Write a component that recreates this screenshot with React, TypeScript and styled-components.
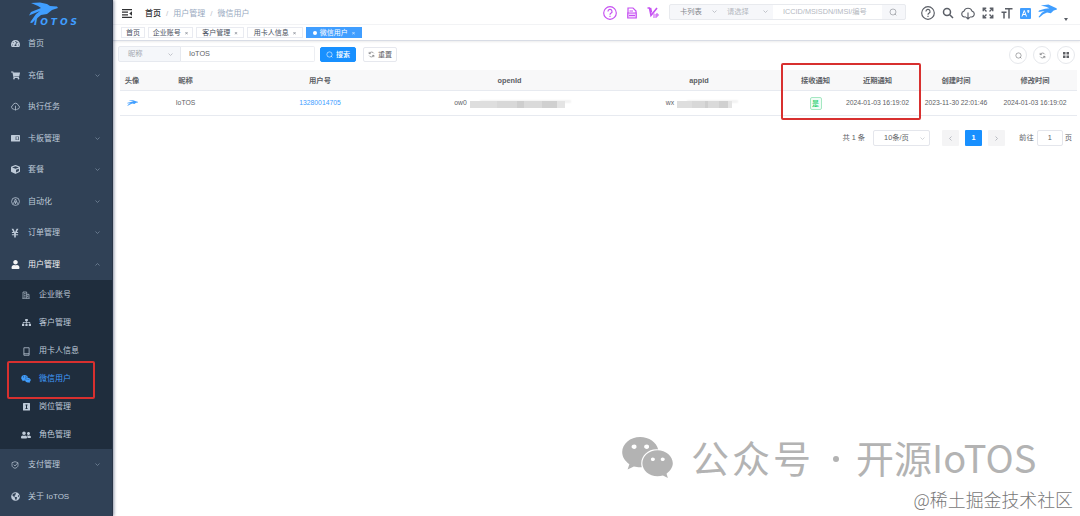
import React from 'react';
import styled, { createGlobalStyle } from 'styled-components';
import {
  FaTachometerAlt, FaShoppingCart, FaYenSign, FaUser, FaSitemap, FaWeixin,
  FaGlobeAmericas, FaUserFriends, FaCube,
} from 'react-icons/fa';

const Global = createGlobalStyle`
  * { box-sizing: border-box; }
  body {
    margin: 0; background: #fff; overflow: hidden; color: #606266;
    font-family: "Liberation Sans", "Noto Sans CJK SC", sans-serif;
    font-size: 7.3px; line-height: 1;
  }
  svg { display: block; flex: none; }
`;

const Page = styled.div`
  position: relative; display: flex; width: 1080px; height: 516px; background: #fff; overflow: hidden;
`;

/* Sidebar */
const Sidebar = styled.aside`
  width: 113px; flex: none; background: #304156; color: #bfcbd9;
  border-right: 1px solid #293547; box-shadow: 1px 0 3px rgba(0, 21, 60, 0.45);
  position: relative; z-index: 1;
`;
const LogoBox = styled.div`
  height: 28px; padding-left: 28px;
`;
const MenuRow = styled.div<{ $open?: boolean }>`
  display: flex; align-items: center; height: 31.5px; padding: 0 12px 0 10px;
  font-size: 8px; color: ${p => (p.$open ? '#f4f4f5' : '#bfcbd9')};
`;
const IconSlot = styled.span`
  display: flex; justify-content: center; width: 10px; margin-right: 8px; flex: none;
`;
const Grow = styled.span`flex: 1; white-space: nowrap; padding-top: 1px;`;
const SubMenu = styled.div`
  background: #1f2d3d; height: 169px; padding-top: 0.8px;
`;
const SubRow = styled.div<{ $active?: boolean }>`
  display: flex; align-items: center; height: 28.1px; padding-left: 21px; font-size: 8px;
  white-space: nowrap; color: ${p => (p.$active ? '#409eff' : '#bfcbd9')};
`;

/* Header */
const Main = styled.main`flex: 1; min-width: 0;`;
const Navbar = styled.header`
  display: flex; align-items: center; height: 25px; padding: 2px 7px 0 9px;
  border-bottom: 1px solid #f3f4f6;
`;
const Crumbs = styled.nav`
  display: flex; gap: 5px; margin: 2px 0 0 13px; font-size: 8px; color: #97a8be; flex: 1;
  b { font-weight: 500; color: #303133; }
  i { font-style: normal; color: #c0c4cc; }
`;
const PurpleIcons = styled.div`
  display: flex; align-items: center; gap: 10px; color: #c650f2; margin: -1px 5px 0 0;
`;
const SearchGroup = styled.div`
  display: flex; width: 237px; height: 16px; border: 1px solid #e8eaee; border-radius: 2px;
  background: #f6f7fa; margin: -3px 15px 0 5px;
`;
const GroupPart = styled.div<{ $w: number; $white?: boolean; $dark?: boolean; $pad?: number }>`
  display: flex; align-items: center; justify-content: space-between; width: ${p => p.$w}px;
  padding: 0 ${p => (p.$white ? 0 : 5)}px 0 ${p => p.$pad ?? 10}px; font-size: 7.3px; white-space: nowrap;
  background: ${p => (p.$white ? '#fff' : 'transparent')}; color: ${p => (p.$dark ? '#85888e' : '#b4b8bf')};
`;
const DarkIcons = styled.div`
  display: flex; align-items: center; color: #5a5e66; gap: 7px; width: 152px;
`;
const CaretDown = styled.span`
  border: 2px solid transparent; border-top: 3px solid #5a5e66; margin: 14px 0 0 0;
`;
const AvatarSlot = styled.span`margin-top: -5px;`;

const Tabs = styled.div`
  display: flex; height: 16px; padding: 2px 0 0 8px; gap: 3px; border-bottom: 1px solid #d8dce5;
  box-shadow: 0 1px 2px rgba(0, 0, 0, 0.08);
`;
const Tab = styled.div<{ $w: number; $active?: boolean }>`
  display: flex; align-items: center; justify-content: center; width: ${p => p.$w}px; height: 11px;
  font-size: 7px; white-space: nowrap; gap: 4px;
  border: 1px solid ${p => (p.$active ? '#409eff' : '#e9ebf1')};
  background: ${p => (p.$active ? '#409eff' : '#fff')};
  color: ${p => (p.$active ? '#fff' : '#495060')};
  small { font-size: 6px; opacity: 0.75; }
`;
const Dot = styled.span`width: 4px; height: 4px; border-radius: 50%; background: #fff; margin-right: -1px;`;

/* Filters */
const Filters = styled.div`
  display: flex; align-items: center; height: 29px; padding: 0 4px 3px 5px;
`;
const FieldSelect = styled.div`
  display: flex; align-items: center; justify-content: space-between; width: 63px; height: 16px;
  padding: 0 7px 0 9px; background: #f5f7fa; border: 1px solid #e6e9ef; border-radius: 2px 0 0 2px; color: #a3a7af;
`;
const FieldInput = styled.div`
  display: flex; align-items: center; width: 134px; height: 16px; padding-left: 8px;
  border: 1px solid #eceef2; border-left: 0; border-radius: 0 2px 2px 0; color: #606266;
`;
const Button = styled.div<{ $primary?: boolean }>`
  display: flex; align-items: center; justify-content: center; gap: 3px; height: 15px;
  width: ${p => (p.$primary ? 36 : 34)}px; margin-left: ${p => (p.$primary ? 5 : 7)}px; border-radius: 2px;
  font-size: 7px; font-weight: ${p => (p.$primary ? 500 : 400)};
  background: ${p => (p.$primary ? '#1890ff' : '#fff')};
  color: ${p => (p.$primary ? '#fff' : '#606266')};
  border: 1px solid ${p => (p.$primary ? '#1890ff' : '#e6e8ee')};
`;
const RoundTools = styled.div`display: flex; gap: 6px; margin: 2px 1px 0 auto;`;
const Round = styled.div`
  display: flex; align-items: center; justify-content: center; width: 18px; height: 18px;
  border: 1px solid #e6e8ec; border-radius: 50%; color: #606266;
`;

/* Table */
const Table = styled.div`margin: 0 3px 0 7px;`;
const Row = styled.div<{ $head?: boolean }>`
  display: grid; grid-template-columns: 24px 83px 186px 193px 186px 47px 77px 80px 78px;
  align-items: center; justify-items: center; height: ${p => (p.$head ? 21 : 24.5)}px; padding-top: 1px;
  background: ${p => (p.$head ? '#f8f8f9' : '#fff')}; border-bottom: 1px solid #e7eaf0;
  font-size: ${p => (p.$head ? 7.3 : 6.8)}px; font-weight: ${p => (p.$head ? 600 : 400)};
  color: ${p => (p.$head ? '#5b5e64' : '#606266')}; white-space: nowrap;
`;
const Phone = styled.span`color: #409eff;`;
const YesTag = styled.span`
  display: flex; align-items: center; justify-content: center; width: 12px; height: 13px;
  border: 1px solid #a5e8c2; border-radius: 2px; background: #f1fcf6; color: #13ce66; font-size: 7px; font-weight: 500;
`;
const Masked = styled.span`display: flex; align-items: center;`;
const Mosaic = styled.span<{ $w: number }>`
  width: ${p => p.$w}px; height: 7px; margin: 2px 0 0 3px; filter: blur(0.7px);
  background: linear-gradient(90deg, #dedede 0 28%, #d8d8d8 28% 50%, #cecece 50% 57%, #dadada 57% 76%, #d0d0d0 76% 92%, #e4e4e4 92%);
  box-shadow: 8px -3px 2px -2px #f2f2f2;
`;

const Pager = styled.div`
  display: flex; align-items: center; justify-content: flex-end; height: 16px; margin: 14.5px 8px 0 0;
  font-size: 7.3px; white-space: nowrap;
`;
const SizeSelect = styled.div`
  display: flex; align-items: center; justify-content: space-between; width: 57px; height: 16px; margin: 0 12px 0 8px;
  padding: 0 4px 0 10px; border: 1px solid #e4e6ec; border-radius: 2px;
`;
const PageButton = styled.div<{ $active?: boolean }>`
  display: flex; align-items: center; justify-content: center; width: 17px; height: 16px; border-radius: 1px;
  margin-right: 6px; font-weight: 700; background: ${p => (p.$active ? '#1890ff' : '#f4f4f5')};
  color: ${p => (p.$active ? '#fff' : '#b0b4bb')};
`;
const JumpTo = styled.span`margin-left: 8px;`;
const JumpInput = styled.span`
  display: flex; align-items: center; justify-content: center; width: 26px; height: 16px; margin: 0 2px 0 3px;
  border: 1px solid #e4e6ec; border-radius: 2px;
`;

/* Overlays */
const Highlight = styled.div<{ $x: number; $y: number; $w: number; $h: number }>`
  position: absolute; z-index: 3; left: ${p => p.$x}px; top: ${p => p.$y}px; width: ${p => p.$w}px; height: ${p => p.$h}px;
  border: 2px solid #d8302f; border-radius: 2px;
`;
const AccountMark = styled.div`
  position: absolute; left: 621px; top: 433px; display: flex; align-items: center; height: 48px;
  color: #b3b3b3; font-family: "Noto Sans CJK SC", sans-serif; font-size: 38px; white-space: nowrap;
`;
const MarkName = styled.span<{ $ml: number; $ls?: number }>`
  margin-left: ${p => p.$ml}px; letter-spacing: ${p => p.$ls || 0}px;
`;
const MarkDot = styled.span`width: 6px; height: 6px; border-radius: 50%; background: #b3b3b3; margin: 3px 0 0 19px;`;
const Community = styled.div`
  position: absolute; right: 7px; top: 489px; font-family: "Noto Sans CJK SC", sans-serif; font-weight: 300;
  font-size: 17.9px; line-height: 20px; color: #777; white-space: nowrap;
`;

const Bird = ({ w, h }: { w: number; h: number }) => (
  <svg width={w} height={h} viewBox="0 0 40 30" preserveAspectRatio="none" fill="#409eff">
    <path d="M6 3L22 1L32 6L39 9L40 12L33 14L27 20L19 18L11 22L3 29L1 28L8 19L14 15L1 17L2 14L15 10L24 9L17 6Z" />
  </svg>
);

const Chevron = ({ up, left, right, size = 5, color = '#75869a' }: { up?: boolean; left?: boolean; right?: boolean; size?: number; color?: string }) => (
  <svg width={size} height={size} viewBox="0 0 10 10" fill="none" stroke={color} strokeWidth="1.6">
    <path d={up ? 'M1 7l4-4 4 4' : left ? 'M7 1L3 5l4 4' : right ? 'M3 1l4 4-4 4' : 'M1 3l4 4 4-4'} />
  </svg>
);

const Line = ({ w, h = w, d, sw = 2 }: { w: number; h?: number; d: string; sw?: number }) => (
  <svg width={w} height={h} viewBox="0 0 24 24" fill="none" stroke="currentColor" strokeWidth={sw}>
    <path d={d} />
  </svg>
);

const MAG = 'M10 3a7 7 0 1 0 0 14a7 7 0 0 0 0-14M15 15l7 7';
const RING = 'M12 3a9 9 0 1 0 0 18a9 9 0 0 0 0-18M17 17l5 5';
const CLOUD = 'M8 19H6a5.500 5.500 0 0 1-1-10.500a7.300 7.300 0 0 1 14 0a5.500 5.500 0 0 1-1 10.500h-2M12 10v12M9 19l3 3 3-3';
const RELOAD = 'M20 8A9 9 0 0 0 4 9M4 3v6h6M4 16a9 9 0 0 0 16-1M20 21v-6h-6';

const Help = ({ size }: { size: number }) => (
  <svg width={size} height={size} viewBox="0 0 24 24" fill="none" stroke="currentColor" strokeWidth="2">
    <circle cx="12" cy="12" r="10.800" />
    <path d="M8.500 9.500a3.500 3.500 0 1 1 5 3c-1.200.7-1.500 1.200-1.500 2.500M12 16.800v2.200" />
  </svg>
);

const CardIcon = () => (
  <svg width="9" height="7" viewBox="0 0 18 14"><rect width="18" height="13" rx="1" fill="currentColor" /><rect x="9" y="3" width="7" height="7" fill="#5a697b" /><rect x="11" y="4" width="3" height="5" fill="currentColor" /></svg>
);
const AutoIcon = () => (
  <svg width="9" height="9" viewBox="0 0 24 24" fill="none" stroke="currentColor" strokeWidth="2"><circle cx="12" cy="12" r="10.500" /><path d="M6.500 18L12 5l5.500 13M9 13h6M12 13v6" /></svg>
);
const PostIcon = () => (
  <svg width="7" height="8" viewBox="0 0 14 16"><rect width="14" height="15" rx="1" fill="currentColor" /><path d="M5 4h4M7 4v7M5 11h4" stroke="#1f2d3d" strokeWidth="2" /></svg>
);

const menu = [
  { label: '首页', icon: <FaTachometerAlt size={9} /> },
  { label: '充值', icon: <FaShoppingCart size={9} />, more: true },
  { label: '执行任务', icon: <Line w={9} d={CLOUD} /> },
  { label: '卡板管理', icon: <CardIcon />, more: true },
  { label: '套餐', icon: <FaCube size={9} />, more: true },
  { label: '自动化', icon: <AutoIcon />, more: true },
  { label: '订单管理', icon: <FaYenSign size={10} />, more: true },
];
const submenu = [
  { label: '企业账号', icon: <Line w={8} d="M3 22V3h11v19M1 22h22M14 10h7v12M6 8h5M6 13h5M6 18h5M17 14v4" /> },
  { label: '客户管理', icon: <FaSitemap size={9} /> },
  { label: '用卡人信息', icon: <Line w={9} d="M5 2h14v20H5zM5 18h14" /> },
  { label: '微信用户', icon: <FaWeixin size={10} />, active: true },
  { label: '岗位管理', icon: <PostIcon /> },
  { label: '角色管理', icon: <FaUserFriends size={10} /> },
];
const headers = ['头像', '昵称', '用户号', 'openId', 'appid', '接收通知', '近期通知', '创建时间', '修改时间'];

export default function App() {
  return (
    <Page>
      <Global />
      <Sidebar>
        <LogoBox>
          <svg width="52" height="27" viewBox="0 0 52 27" fill="#409eff">
            <path d="M3 3L12 2.500L19 4L22 6L29 6.500L30 8L24 10L19 14L13 15L7 20L4 23L2 22.500L8 14L12 11L1 15.500L3 12L13 8L10 6Z" />
            <text x="6" y="24.500" fontFamily="DejaVu Sans" fontSize="9" fontWeight="700" fontStyle="oblique" textLength="43" lengthAdjust="spacing">IOTOS</text>
          </svg>
        </LogoBox>
        {menu.map(m => (
          <MenuRow key={m.label}><IconSlot>{m.icon}</IconSlot><Grow>{m.label}</Grow>{m.more && <Chevron />}</MenuRow>
        ))}
        <MenuRow $open><IconSlot><FaUser size={9} /></IconSlot><Grow>用户管理</Grow><Chevron up /></MenuRow>
        <SubMenu>
          {submenu.map(s => (
            <SubRow key={s.label} $active={s.active}><IconSlot>{s.icon}</IconSlot>{s.label}</SubRow>
          ))}
        </SubMenu>
        <MenuRow><IconSlot><Line w={8} d="M12 2l9 3v8c0 5-4 7-9 9c-5-2-9-4-9-9V5zM8 11l4 4 8-9" /></IconSlot><Grow>支付管理</Grow><Chevron /></MenuRow>
        <MenuRow><IconSlot><FaGlobeAmericas size={9} /></IconSlot><Grow>关于 IoTOS</Grow></MenuRow>
      </Sidebar>

      <Main>
        <Navbar>
          <svg width="10" height="9" viewBox="0 0 20 18" fill="#303133">
            <path d="M0 0h20v2.400H0zM0 5.200h12v2.400H0zM0 10.400h12v2.400H0zM0 15.600h20V18H0zM20 4.500v9L14.500 9z" />
          </svg>
          <Crumbs><b>首页</b><i>/</i><span>用户管理</span><i>/</i><span>微信用户</span></Crumbs>
          <PurpleIcons>
            <Help size={14} />
            <svg width="10" height="12" viewBox="0 0 20 24" fill="none" stroke="currentColor" strokeWidth="2.400">
              <path d="M2 12V2h10l6 6v4" /><path d="M1.500 12h17v10h-17z" fill="currentColor" fillOpacity=".25" /><path d="M5 8h7M4 17h12" />
            </svg>
            <svg width="12" height="12" viewBox="0 0 24 24" fill="none" stroke="currentColor" strokeWidth="3.200">
              <path d="M1 2h4l3 15L20 2M7 2l2 9" /><path d="M14 13v9M18 22v-8h4v4h-4" strokeWidth="2" />
            </svg>
          </PurpleIcons>
          <SearchGroup>
            <GroupPart $w={52} $dark>卡列表<Chevron color="#b5b8bf" /></GroupPart>
            <GroupPart $w={51} $pad={5}>请选择<Chevron color="#b5b8bf" /></GroupPart>
            <GroupPart $w={109} $white>ICCID/MSISDN/IMSI/编号</GroupPart>
            <GroupPart $w={23} $pad={7} $dark><Line w={8} d={RING} sw={1.8} /></GroupPart>
          </SearchGroup>
          <DarkIcons>
            <Help size={14} />
            <Line w={12} d={MAG} sw={3} />
            <svg width="14" height="13" viewBox="0 0 28 26" fill="none" stroke="currentColor" strokeWidth="2.200">
              <path d="M10 20H7a6 6 0 0 1-1-11.800a8.500 8.500 0 0 1 16 0A6 6 0 0 1 21 20h-3M14 11v13M10.500 20.500L14 24l3.500-3.500" />
            </svg>
            <Line w={12} d="M2.500 8.500v-6h6M3 3l6 6M15.500 2.500h6v6M21 3l-6 6M2.500 15.500v6h6M3 21l6-6M15.500 21.500h6v-6M21 21l-6-6" sw={2.8} />
            <Line w={12} d="M8 3.500h15M16 3.500V23M1 10.500h10M6 10.500V23" sw={3} />
            <svg width="11" height="11" viewBox="0 0 22 22"><rect width="22" height="22" rx="2" fill="#409eff" /><path d="M4 17L8.500 5L13 17M5.500 13h6M14 6h5M16.500 4v6" fill="none" stroke="#fff" strokeWidth="2" /></svg>
            <AvatarSlot><Bird w={19} h={14} /></AvatarSlot>
            <CaretDown />
          </DarkIcons>
        </Navbar>
        <Tabs>
          <Tab $w={24}>首页</Tab>
          <Tab $w={45}>企业账号<small>×</small></Tab>
          <Tab $w={48}>客户管理<small>×</small></Tab>
          <Tab $w={56}>用卡人信息<small>×</small></Tab>
          <Tab $w={56} $active><Dot />微信用户<small>×</small></Tab>
        </Tabs>
        <Filters>
          <FieldSelect>昵称<Chevron color="#b5b8bf" /></FieldSelect>
          <FieldInput>IoTOS</FieldInput>
          <Button $primary><Line w={7} d={RING} />搜索</Button>
          <Button><Line w={7} d={RELOAD} />重置</Button>
          <RoundTools>
            <Round><Line w={7} d={RING} sw={1.8} /></Round>
            <Round><Line w={7} d={RELOAD} /></Round>
            <Round><svg width="6" height="6" viewBox="0 0 12 12" fill="currentColor"><path d="M0 0h5v5H0zM7 0h5v5H7zM0 7h5v5H0zM7 7h5v5H7z" /></svg></Round>
          </RoundTools>
        </Filters>
        <Table>
          <Row $head>{headers.map(h => <span key={h}>{h}</span>)}</Row>
          <Row>
            <Bird w={11} h={6} />
            <span>IoTOS</span>
            <Phone>13280014705</Phone>
            <Masked>ow0<Mosaic $w={95} /></Masked>
            <Masked>wx<Mosaic $w={55} /></Masked>
            <YesTag>是</YesTag>
            <span>2024-01-03 16:19:02</span>
            <span>2023-11-30 22:01:46</span>
            <span>2024-01-03 16:19:02</span>
          </Row>
        </Table>
        <Pager>
          共 1 条
          <SizeSelect>10条/页<Chevron color="#c8cbd1" /></SizeSelect>
          <PageButton><Chevron left color="#a9adb5" /></PageButton>
          <PageButton $active>1</PageButton>
          <PageButton><Chevron right color="#a9adb5" /></PageButton>
          <JumpTo>前往</JumpTo><JumpInput>1</JumpInput>页
        </Pager>
      </Main>

      <Highlight $x={7} $y={361} $w={88} $h={38} />
      <Highlight $x={781} $y={63} $w={140} $h={57} />
      <AccountMark>
        <FaWeixin size={53} />
        <MarkName $ml={17} $ls={3}>公众号</MarkName>
        <MarkDot />
        <MarkName $ml={17}>开源IoTOS</MarkName>
      </AccountMark>
      <Community>@稀土掘金技术社区</Community>
    </Page>
  );
}
